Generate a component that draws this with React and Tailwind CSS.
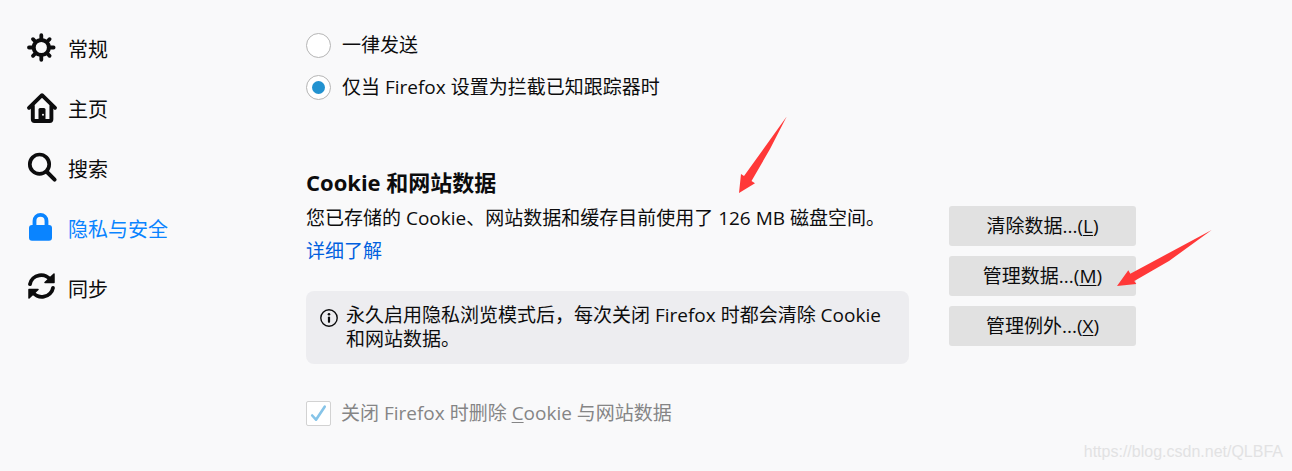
import React, { useState } from 'react';

const GearIcon = () => (
  <svg viewBox="0 0 30 30" className="size-[30px] shrink-0" fill="none" stroke="currentColor" strokeLinecap="round">
    <circle cx="15.3" cy="14.5" r="7.6" strokeWidth="4" />
    <path
      strokeWidth="3.8"
      d="M15.3 6V2.2M15.3 23v3.800M6.8 14.5H3M23.8 14.5h3.800M9.3 8.5L7 6.200M21.3 20.5l2.300 2.300M9.3 20.5L7 22.800M21.3 8.5l2.300-2.300"
    />
  </svg>
);

const HomeIcon = () => (
  <svg viewBox="0 0 30 30" className="size-[30px] shrink-0 overflow-visible" fill="none" stroke="currentColor" strokeLinecap="round" strokeLinejoin="round">
    <path strokeWidth="3.9" d="M3 14.8L16 2.2l13 12.6" />
    <path strokeWidth="3.9" d="M6.8 13v13.3q0 1.7 1.7 1.7h15.2q1.7 0 1.7-1.7V13" />
    <path fill="currentColor" stroke="none" d="M12.5 29V16.500q0-1.500 1.500-1.500h4q1.500 0 1.500 1.500V29z" />
    <circle cx="17" cy="21.700" r="1" fill="#f9f9fa" stroke="none" />
  </svg>
);

const SearchIcon = () => (
  <svg viewBox="0 0 30 30" className="size-[30px] shrink-0 overflow-visible" fill="none" stroke="currentColor" strokeLinecap="round">
    <circle cx="13.500" cy="11.200" r="9.700" strokeWidth="3.700" />
    <path strokeWidth="4" d="M21 19l7.600 7.600" />
  </svg>
);

const LockIcon = () => (
  <svg viewBox="0 0 30 30" className="size-[30px] shrink-0" fill="none" stroke="currentColor">
    <rect x="3" y="12" width="23" height="15.700" rx="3" fill="currentColor" stroke="none" />
    <path strokeWidth="3.800" d="M8.500 13V7.900a6 6 0 0 1 12 0V13" />
  </svg>
);

const SyncIcon = () => (
  <svg viewBox="0 0 30 30" className="size-[30px] shrink-0" fill="none" stroke="currentColor" strokeLinecap="round">
    <path strokeWidth="3.800" d="M4 11.200A11.300 10.800 0 0 1 25 7.800" />
    <path strokeWidth="3.800" d="M27 14.800A11.300 10.800 0 0 1 6 18.200" />
    <path fill="currentColor" strokeWidth="1.500" strokeLinejoin="round" d="M28 1v8.600h-9z" />
    <path fill="currentColor" strokeWidth="1.500" strokeLinejoin="round" d="M3 25v-8.600h9z" />
  </svg>
);

const categories = [
  { id: 'general', label: '常规', Icon: GearIcon },
  { id: 'home', label: '主页', Icon: HomeIcon },
  { id: 'search', label: '搜索', Icon: SearchIcon },
  { id: 'privacy', label: '隐私与安全', Icon: LockIcon },
  { id: 'sync', label: '同步', Icon: SyncIcon },
];

const RadioRow = ({ value, current, onChange, children }) => (
  <label className="flex h-[42px] items-center gap-[11px]">
    <input
      type="radio"
      name="dnt"
      value={value}
      checked={current === value}
      onChange={() => onChange(value)}
      className="grid size-[25px] shrink-0 appearance-none place-items-center rounded-full border border-[#b5b5b5] bg-white before:size-[13px] before:rounded-full checked:before:bg-[#2292d0]"
    />
    <span>{children}</span>
  </label>
);

const DataButton = ({ text, accessKey }) => (
  <button accessKey={accessKey} className="h-10 rounded-[3px] bg-[#e1e1e1] hover:bg-[#d4d4d4]">
    {text}...(<span className="underline underline-offset-2">{accessKey}</span>)
  </button>
);

const App = () => {
  const [category, setCategory] = useState('privacy');
  const [dnt, setDnt] = useState('blocking');

  return (
    <div className="relative flex min-h-screen bg-[#f9f9fa] font-['Open_Sans','Noto_Sans_CJK_SC',sans-serif] text-[19px] text-[#0c0c0d]">
      <nav className="flex w-[306px] shrink-0 flex-col pt-[18px] pl-[26px] text-xl">
        {categories.map(({ id, label, Icon }) => (
          <button
            key={id}
            onClick={() => setCategory(id)}
            className={`flex h-[60px] items-center gap-3 text-left ${category === id ? 'text-[#0a84ff]' : ''}`}
          >
            <Icon />
            <span className="pt-[3px]">{label}</span>
          </button>
        ))}
      </nav>

      <main className="max-w-[830px] flex-1 pt-6">
        <RadioRow value="always" current={dnt} onChange={setDnt}>一律发送</RadioRow>
        <RadioRow value="blocking" current={dnt} onChange={setDnt}>仅当 Firefox 设置为拦截已知跟踪器时</RadioRow>

        <h2 className="mt-[58px] mb-[2px] text-[22px] leading-8 font-bold">Cookie 和网站数据</h2>
        <div className="flex gap-10">
          <div className="flex-1">
            <p className="leading-9">您已存储的 Cookie、网站数据和缓存目前使用了 126 MB 磁盘空间。</p>
            <a href="#learn-more" className="block leading-[30px] text-[#0060df]">详细了解</a>
            <div className="mt-[25px] flex gap-2 rounded-lg bg-[#ededf0] pt-3 pr-6 pb-[13px] pl-[14px]">
              <svg viewBox="0 0 18 18" className="mt-[6px] size-[18px] shrink-0" fill="none" stroke="currentColor">
                <circle cx="9" cy="9" r="8.200" strokeWidth="1.400" />
                <path strokeWidth="2.200" strokeLinecap="round" d="M9 8.600v4.200" />
                <circle cx="9" cy="5.200" r="1.300" fill="currentColor" stroke="none" />
              </svg>
              <p className="leading-6">永久启用隐私浏览模式后，每次关闭 Firefox 时都会清除 Cookie 和网站数据。</p>
            </div>
          </div>
          <div className="flex w-[187px] shrink-0 flex-col gap-[10px] pt-[6px]">
            <DataButton text="清除数据" accessKey="L" />
            <DataButton text="管理数据" accessKey="M" />
            <DataButton text="管理例外" accessKey="X" />
          </div>
        </div>

        <label className="mt-[37px] flex h-[25px] items-center gap-[10px] text-[#858586]">
          <span className="relative size-[25px] shrink-0">
            <input type="checkbox" checked disabled readOnly className="block size-[25px] appearance-none rounded-[2px] border border-[#d2d2d2] bg-white" />
            <svg viewBox="0 0 25 25" className="absolute inset-0" fill="none" stroke="#86c4e8" strokeWidth="2.600" strokeLinecap="round" strokeLinejoin="round">
              <path d="M6.200 14.500l3.800 4.200 8.700-13" />
            </svg>
          </span>
          <span>关闭 Firefox 时删除 <span className="underline underline-offset-2">C</span>ookie 与网站数据</span>
        </label>
      </main>

      {/* annotation arrows */}
      <svg viewBox="0 0 48 77" className="pointer-events-none absolute top-[116px] left-[739px] h-[77px] w-12" fill="#ff3838">
        <path d="M0 77L2 58l3 2L47.700.500 31 33 12.500 65l3.500 2.300z" />
      </svg>
      <svg viewBox="0 0 95 56" className="pointer-events-none absolute top-[230px] left-[1117px] h-14 w-[95px]" fill="#ff3838">
        <path d="M0 56L11.300 40.300l2 3.400L94.700 0 52 31 17.300 51l2 3z" />
      </svg>

      <span className="absolute right-[9px] bottom-[7px] font-['Liberation_Sans',sans-serif] text-base text-[#e2e2e3]">
        https://blog.csdn.net/QLBFA
      </span>
    </div>
  );
};

export default App;
